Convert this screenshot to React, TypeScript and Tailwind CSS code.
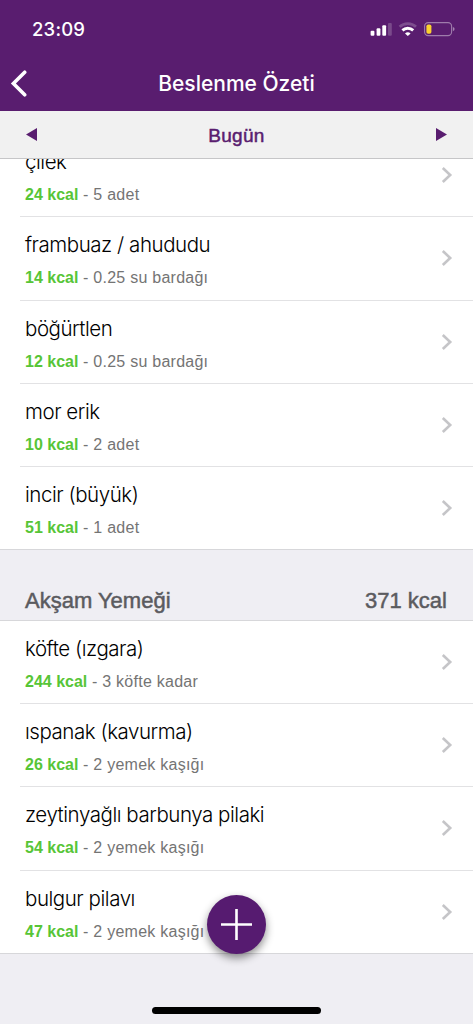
type Food = {
    name: string;
    kcal: number;
    portion: string;
};

const snacks: Food[] = [
    { name: 'çilek', kcal: 24, portion: '5 adet' },
    { name: 'frambuaz / ahududu', kcal: 14, portion: '0.25 su bardağı' },
    { name: 'böğürtlen', kcal: 12, portion: '0.25 su bardağı' },
    { name: 'mor erik', kcal: 10, portion: '2 adet' },
    { name: 'incir (büyük)', kcal: 51, portion: '1 adet' },
];

const dinner: Food[] = [
    { name: 'köfte (ızgara)', kcal: 244, portion: '3 köfte kadar' },
    { name: 'ıspanak (kavurma)', kcal: 26, portion: '2 yemek kaşığı' },
    { name: 'zeytinyağlı barbunya pilaki', kcal: 54, portion: '2 yemek kaşığı' },
    { name: 'bulgur pilavı', kcal: 47, portion: '2 yemek kaşığı' },
];

function StatusIcons() {
    return (
        <svg className="mb-[2px]" width="86" height="18" viewBox="0 0 86 18" fill="none">
            {/* signal */}
            <rect x="0.6" y="10.8" width="3.8" height="5" rx="1" fill="#fff" />
            <rect x="6.6" y="8.3" width="3.8" height="7.5" rx="1" fill="#fff" />
            <rect x="12.3" y="5.3" width="3.8" height="10.5" rx="1" fill="#fff" />
            <rect x="18" y="3" width="3.8" height="12.8" rx="1" fill="#fff" fillOpacity="0.2" />
            {/* wifi */}
            <path d="M29.6 6.8a12.2 12.2 0 0 1 16.4 0" stroke="#fff" strokeOpacity="0.22" strokeWidth="2.8" />
            <path d="M32.4 10.4a7.9 7.9 0 0 1 10.8 0" stroke="#fff" strokeWidth="2.9" />
            <path d="M35 13.4a4.2 4.2 0 0 1 5.6 0l-2.8 2.6z" fill="#fff" />
            {/* battery */}
            <rect x="54.6" y="2.6" width="27" height="13" rx="3.6" stroke="#fff" strokeOpacity="0.42" strokeWidth="1.1" />
            <rect x="56.4" y="4.4" width="5" height="9.4" rx="1.8" fill="#fbd12f" />
            <path d="M82.9 6.9q1.7.6 1.7 2.2t-1.7 2.2z" fill="#fff" fillOpacity="0.45" />
        </svg>
    );
}

function FoodRow({ food, last }: { food: Food; last: boolean }) {
    return (
        <div className="h-[83.25px] shrink-0 pl-5">
            <div className={`flex h-full items-center justify-between border-b pl-[5px] pr-5 ${last ? 'border-transparent' : 'border-[#e2e2e4]'}`}>
                <div className="pt-[3px]">
                    <div className="text-[20.5px] font-light leading-[28px] tracking-[-0.45px] text-black font-['Inter',sans-serif]">{food.name}</div>
                    <div className="mt-[7px] h-[22px] text-[16px] leading-[24px] tracking-[0.25px] text-[#747474]">
                        <span className="font-bold tracking-normal text-[#57c537]">{food.kcal} kcal</span> - {food.portion}
                    </div>
                </div>
                <svg width="12" height="18" viewBox="0 0 12 18" fill="none" stroke="#c5c5c8" strokeWidth="2.6">
                    <path d="M1.8 2l7.4 7-7.4 7" />
                </svg>
            </div>
        </div>
    );
}

function FoodList({ foods }: { foods: Food[] }) {
    return (
        <div className="bg-white">
            {foods.map((food, i) => (
                <FoodRow key={food.name} food={food} last={i === foods.length - 1} />
            ))}
        </div>
    );
}

export default function App() {
    return (
        <div className="relative flex h-[1024px] w-[473px] flex-col overflow-hidden bg-[#efeef3] font-['Liberation_Sans',sans-serif]">
            <header className="h-[111px] shrink-0 bg-[#591d6f] text-white font-['Inter',sans-serif]">
                <div className="flex h-[56px] items-center justify-between pl-8 pr-[17px] pt-[3px]">
                    <span className="text-[18.5px] font-medium tracking-[0.2px]">23:09</span>
                    <StatusIcons />
                </div>
                <div className="grid h-[55px] grid-cols-[60px_1fr_60px] items-center">
                    <svg className="ml-[9px]" width="18" height="28" viewBox="0 0 18 28" fill="none" stroke="#fff" strokeWidth="3.6" strokeLinecap="round">
                        <path d="M15.7 2.2L4.4 13.5 15.7 24.8" strokeLinejoin="miter" />
                    </svg>
                    <h1 className="text-center text-[21px] font-medium">Beslenme Özeti</h1>
                </div>
            </header>

            <div className="flex h-[48px] shrink-0 items-center justify-between border-b border-[#c6c6c8] bg-[#f1f1f1] px-[26px] text-[#591d6f]">
                <svg width="11" height="13" viewBox="0 0 11 13" fill="currentColor">
                    <path d="M0 6.5L11 0v13z" />
                </svg>
                <span className="pt-[3px] text-[19px] tracking-[0.3px] [-webkit-text-stroke:0.5px_#591d6f]">Bugün</span>
                <svg width="11" height="13" viewBox="0 0 11 13" fill="currentColor">
                    <path d="M11 6.5L0 0v13z" />
                </svg>
            </div>

            <main className="flex-1 overflow-hidden">
                <div className="mt-[-25px]">
                    <FoodList foods={snacks} />
                    <div className="mt-[-1px] flex h-[71.5px] items-end justify-between border-y border-[#d7d7da] bg-[#efeef3] pb-[5px] pl-[25px] pr-[26px] text-[22px] leading-[28px] text-[#5b5b5f] [-webkit-text-stroke:0.5px_#5b5b5f]">
                        <span>Akşam Yemeği</span>
                        <span>371 kcal</span>
                    </div>
                    <FoodList foods={dinner} />
                    <div className="mt-[-1px] h-[2px] border-t border-[#d7d7da] bg-[#efeef3]" />
                </div>
            </main>

            <button className="absolute left-[207px] top-[895px] flex size-[59px] items-center justify-center rounded-full bg-[#561b70] shadow-[0_4px_9px_rgba(0,0,0,0.45)]">
                <svg width="31" height="31" viewBox="0 0 31 31" stroke="#fff" strokeWidth="2.6">
                    <path d="M15.5 0v31M0 15.5h31" />
                </svg>
            </button>
            <div className="absolute bottom-[10px] left-[152px] h-[7px] w-[169px] rounded-full bg-black" />
        </div>
    );
}
